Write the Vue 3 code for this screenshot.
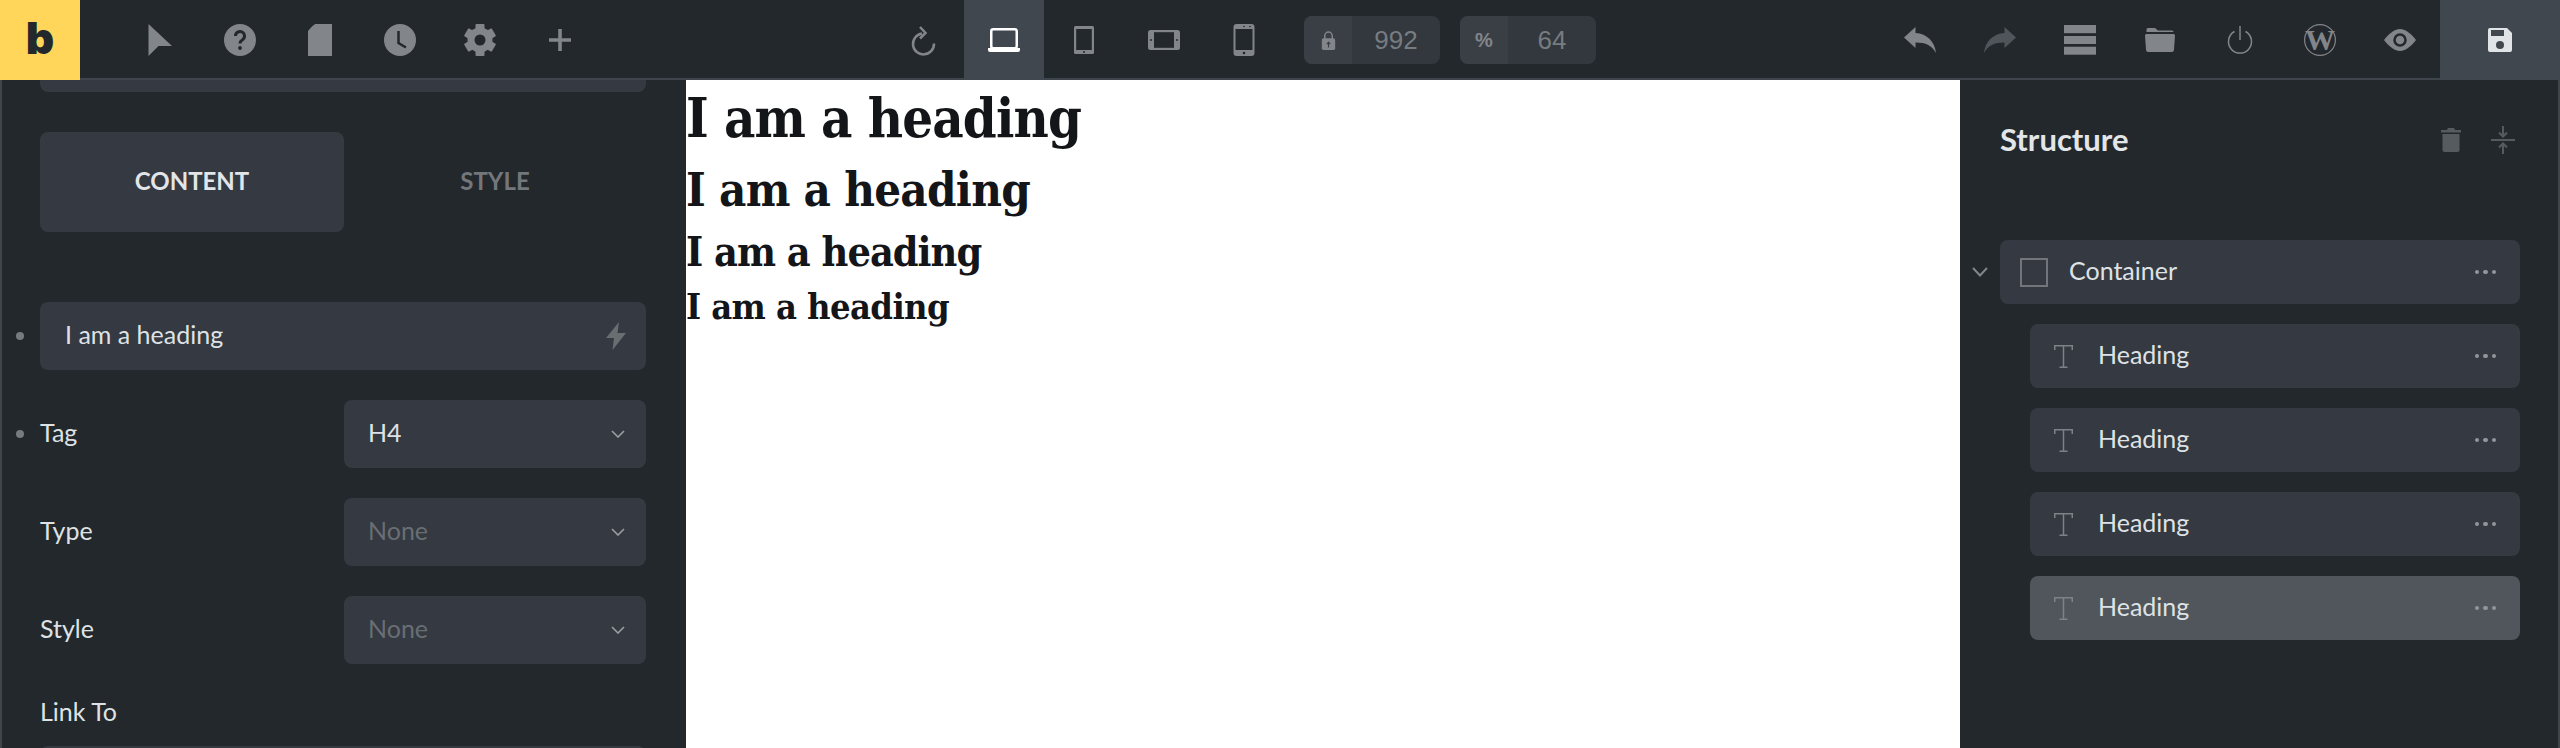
<script setup>
const selects = [
  { label: 'Tag', value: 'H4', dot: true, placeholder: false },
  { label: 'Type', value: 'None', dot: false, placeholder: true },
  { label: 'Style', value: 'None', dot: false, placeholder: true }
]
const headings = ['h1', 'h2', 'h3', 'h4']
const children = [false, false, false, true]
const teeth = [0, 60, 120, 180, 240, 300]
</script>

<template>
  <div class="app">
    <header class="topbar">
      <div class="logo">b</div>

      <div class="group first">
        <div class="cell"><svg viewBox="0 0 40 40"><path class="f" d="M8.5 4L32 26H18.5L8.5 36Z" /></svg></div>
        <div class="cell">
          <svg viewBox="0 0 40 40">
            <circle class="f" cx="20" cy="20" r="16" />
            <path class="cut" d="M15.5 16a4.5 4.5 0 1 1 7 3.7c-1.6 1-2.5 1.8-2.5 3.8" stroke-width="3" />
            <circle cx="20" cy="28" r="1.9" fill="#23282c" />
          </svg>
        </div>
        <div class="cell">
          <svg viewBox="0 0 40 40">
            <path class="f" d="M15 4H32V36H8V11Z" />
            <path class="f" d="M13.5 5L9 10H13.5Z" />
          </svg>
        </div>
        <div class="cell">
          <svg viewBox="0 0 40 40">
            <circle class="f" cx="20" cy="20" r="16" />
            <path class="cut" d="M18.5 11V23L26 27.5" stroke-width="2.5" />
          </svg>
        </div>
        <div class="cell">
          <svg viewBox="0 0 40 40">
            <circle class="f" cx="20" cy="20" r="12.5" />
            <rect v-for="t in teeth" :key="t" class="f" x="15.5" y="4" width="9" height="7" rx="1" :transform="`rotate(${t} 20 20)`" />
            <circle cx="20" cy="20" r="5.5" fill="#23282c" />
          </svg>
        </div>
        <div class="cell"><svg viewBox="0 0 40 40"><path class="s" d="M20 9V31M9 20H31" stroke-width="3.6" /></svg></div>
      </div>

      <div class="group devices">
        <div class="cell">
          <svg viewBox="0 0 40 40">
            <path class="s" d="M18 13.5A10.5 10.5 0 1 0 30 23.5" stroke-width="2.5" />
            <path class="s" d="M16 7L21.5 13L16 18.5" stroke-width="2.5" />
          </svg>
        </div>
        <div class="cell active">
          <svg viewBox="0 0 40 40">
            <rect x="7.25" y="9.25" width="25.5" height="19" rx="2" fill="none" stroke="#fff" stroke-width="2.5" />
            <path d="M4 28H36V30a2 2 0 0 1-2 2H6a2 2 0 0 1-2-2Z" fill="#fff" />
          </svg>
        </div>
        <div class="cell">
          <svg viewBox="0 0 40 40">
            <rect class="f" x="10" y="6" width="20" height="28" rx="1.5" />
            <rect x="12.2" y="9" width="15.6" height="21" fill="#23282c" />
            <circle cx="20" cy="32" r="1" fill="#23282c" />
          </svg>
        </div>
        <div class="cell">
          <svg viewBox="0 0 40 40">
            <rect class="f" x="4" y="10" width="32" height="20" rx="2.5" />
            <rect x="10" y="12.2" width="20" height="15.6" fill="#23282c" />
            <circle cx="7" cy="20" r="1" fill="#23282c" />
            <circle cx="33" cy="20" r="1" fill="#23282c" />
          </svg>
        </div>
        <div class="cell">
          <svg viewBox="0 0 40 40">
            <rect class="f" x="9.5" y="4" width="21" height="32" rx="3" />
            <rect x="11.5" y="9" width="17" height="21" fill="#23282c" />
            <circle cx="20" cy="33" r="1.3" fill="#23282c" />
            <circle cx="20" cy="6.5" r="0.8" fill="#23282c" />
            <circle cx="26" cy="6.5" r="0.8" fill="#23282c" />
          </svg>
        </div>
      </div>

      <div class="size">
        <span class="size-tag">
          <svg viewBox="0 0 20 24" class="lock">
            <path class="s" d="M5.5 12V7a4.5 4.5 0 0 1 9 0V12" stroke-width="1.8" />
            <rect class="f" x="2" y="10" width="16" height="14" rx="2" />
            <path d="M10 21V15M8 17l2-2.4L12 17" fill="none" stroke="#3a3f46" stroke-width="1.4" />
          </svg>
        </span>
        <span class="size-num">992</span>
      </div>
      <div class="size">
        <span class="size-tag pct">%</span>
        <span class="size-num">64</span>
      </div>

      <div class="group actions">
        <div class="cell">
          <svg viewBox="0 0 40 40"><path class="f" d="M4 17.5L15.5 7V13C27 13.5 35 22 36 33C32 25.5 26 22.5 15.5 22.5V28Z" /></svg>
        </div>
        <div class="cell">
          <svg viewBox="0 0 40 40"><path fill="#4f555a" d="M36 17.5L24.5 7V13C13 13.5 5 22 4 33C8 25.5 14 22.5 24.5 22.5V28Z" /></svg>
        </div>
        <div class="cell">
          <svg viewBox="0 0 40 40">
            <rect class="f" x="4" y="5" width="32" height="8.2" />
            <rect class="f" x="4" y="16" width="32" height="8" />
            <rect class="f" x="4" y="26.7" width="32" height="8" />
          </svg>
        </div>
        <div class="cell">
          <svg viewBox="0 0 40 40">
            <path class="f" d="M8 8h7l3 2.5h14a1.5 1.5 0 0 1 1.5 1.5H6.5V9.5A1.5 1.5 0 0 1 8 8Z" />
            <path class="f" d="M5 15.5A1.5 1.5 0 0 1 6.5 14h27a1.5 1.5 0 0 1 1.5 1.5L34 29.5a2.5 2.5 0 0 1-2.5 2.5h-23a2.5 2.5 0 0 1-2.5-2.5Z" />
          </svg>
        </div>
        <div class="cell">
          <svg viewBox="0 0 40 40">
            <path class="s" d="M14.5 11.5A11.5 11.5 0 1 0 25.5 11.5" stroke-width="1.5" />
            <path class="s" d="M20 6V20" stroke-width="1.5" />
          </svg>
        </div>
        <div class="cell">
          <svg viewBox="0 0 40 40">
            <circle class="s" cx="20" cy="20" r="15.4" stroke-width="1.2" />
            <text class="wp" x="20" y="30" text-anchor="middle">W</text>
          </svg>
        </div>
        <div class="cell">
          <svg viewBox="0 0 40 40">
            <path class="f" d="M4 20C10 12.5 15 9 20 9s10 3.5 16 11c-6 7.500-11 11-16 11s-10-3.500-16-11Z" />
            <circle class="f" cx="20" cy="20" r="5.500" stroke="#23282c" stroke-width="2.500" />
          </svg>
        </div>
      </div>

      <div class="save">
        <svg viewBox="0 0 40 40">
          <path fill="#e1e4e7" d="M10 8H27L32 13V30a2 2 0 0 1-2 2H10a2 2 0 0 1-2-2V10a2 2 0 0 1 2-2Z" />
          <rect x="11" y="10" width="13" height="6" fill="#40474f" />
          <circle cx="20" cy="25" r="4" fill="#40474f" />
        </svg>
      </div>
    </header>

    <div class="main">
      <aside class="panel">
        <div class="box clipped"></div>

        <div class="tabs">
          <div class="tab on">CONTENT</div>
          <div class="tab">STYLE</div>
        </div>

        <div class="row text-row">
          <i class="dot"></i>
          <div class="box input">
            <span>I am a heading</span>
            <svg class="bolt" viewBox="0 0 20 28"><path d="M13 0L0 16H8L6.500 28L20 11H11.500Z" /></svg>
          </div>
        </div>

        <div v-for="s in selects" :key="s.label" class="row">
          <i v-if="s.dot" class="dot"></i>
          <label>{{ s.label }}</label>
          <div class="box select" :class="{ placeholder: s.placeholder }">
            <span>{{ s.value }}</span>
            <svg class="chev" viewBox="0 0 14 8"><path d="M1 1L7 7L13 1" /></svg>
          </div>
        </div>

        <div class="link-label">Link To</div>
        <div class="box"></div>
      </aside>

      <section class="canvas">
        <div v-for="h in headings" :key="h" class="heading" :class="h">I am a heading</div>
      </section>

      <aside class="structure">
        <div class="st-head">
          <span class="st-title">Structure</span>
          <svg class="trash" viewBox="0 0 20 24">
            <path d="M7 0H13L14 2H20V4.500H0V2H6Z" />
            <path d="M1.500 6H18.500V22a2 2 0 0 1-2 2H3.500a2 2 0 0 1-2-2Z" />
          </svg>
          <svg class="collapse" viewBox="0 0 24 28">
            <path d="M12 0V10M8 6.500L12 10.500L16 6.500M0 14H24M12 28V18M8 21.500L12 17.500L16 21.500" />
          </svg>
        </div>

        <div class="tree">
          <div class="node-wrap">
            <svg class="tree-chev" viewBox="0 0 16 10"><path d="M1 1L8 8.500L15 1" /></svg>
            <div class="node parent">
              <i class="square"></i>
              <span>Container</span>
              <b class="more"><i></i><i></i><i></i></b>
            </div>
          </div>
          <div v-for="(sel, i) in children" :key="i" class="node child" :class="{ selected: sel }">
            <svg class="t-icon" viewBox="0 0 19 23"><path d="M.75 5V.75H18.250V5M9.500.75V22.250M5.500 22.250H13.500" /></svg>
            <span>Heading</span>
            <b class="more"><i></i><i></i><i></i></b>
          </div>
        </div>
      </aside>
    </div>
  </div>
</template>

<style scoped>
.app {
  width: 2560px;
  height: 748px;
  overflow: hidden;
  display: flex;
  flex-direction: column;
  background: #23282c;
  font-family: Lato, sans-serif;
  color: #dfe2e5;
}

.topbar {
  height: 80px;
  flex: none;
  display: flex;
  box-sizing: border-box;
  border-bottom: 2px solid #3f454c;
}
.logo {
  width: 80px;
  height: 80px;
  flex: none;
  background: #ffd65a;
  color: #23282c;
  font: 900 44px/76px Inter, sans-serif;
  text-align: center;
}
.group { display: flex; height: 80px; }
.first { margin-left: 40px; }
.devices { margin-left: 284px; }
.actions { margin-left: auto; }
.cell {
  width: 80px;
  height: 80px;
  display: flex;
  align-items: center;
  justify-content: center;
}
.cell.active { background: #40474f; }
.cell svg, .save svg { width: 40px; height: 40px; display: block; }
.f { fill: #82868b; }
.s { fill: none; stroke: #82868b; }
.cut { fill: none; stroke: #23282c; }
.wp { font: 700 30px "Liberation Serif", serif; fill: #82868b; }

.size {
  width: 136px;
  height: 48px;
  margin-top: 16px;
  margin-left: 20px;
  display: flex;
  border-radius: 8px;
  overflow: hidden;
  background: #33373e;
}
.size-tag {
  width: 48px;
  background: #3a3f46;
  display: flex;
  align-items: center;
  justify-content: center;
  color: #82868b;
}
.pct { font: 700 20px "Liberation Sans", sans-serif; }
.lock { width: 17px; height: 20px; }
.size-num {
  flex: 1;
  text-align: center;
  font: 26px/48px "Liberation Sans", sans-serif;
  color: #777c81;
}
.save {
  width: 120px;
  height: 80px;
  flex: none;
  background: #40474f;
  display: flex;
  align-items: center;
  justify-content: center;
}

.main { flex: 1; display: flex; min-height: 0; }

.panel {
  width: 686px;
  flex: none;
  box-sizing: border-box;
  padding: 0 40px 0 38px;
  border-left: 2px solid #3f454c;
  overflow: hidden;
  font-size: 25px;
}
.box {
  height: 68px;
  flex: none;
  background: #353941;
  border-radius: 8px;
}
.box span, .row label { padding-bottom: 4px; }
.clipped { margin-top: -56px; }
.tabs {
  display: grid;
  grid-template-columns: 304px 302px;
  margin-top: 40px;
  margin-bottom: 70px;
}
.tab {
  height: 100px;
  border-radius: 8px;
  line-height: 98px;
  text-align: center;
  font-size: 24px;
  font-weight: 700;
  color: #73777c;
}
.tab.on { background: #353941; color: #e3e6e9; }
.row {
  display: flex;
  align-items: center;
  margin-bottom: 30px;
}
.dot {
  width: 8px;
  height: 8px;
  flex: none;
  margin-left: -24px;
  margin-right: 16px;
  border-radius: 50%;
  background: #767b80;
}
.row label { flex: 1; }
.input {
  flex: 1;
  display: flex;
  align-items: center;
  justify-content: space-between;
  padding: 0 20px 0 25px;
}
.bolt { width: 20px; height: 28px; fill: #696e73; }
.select {
  width: 302px;
  box-sizing: border-box;
  display: flex;
  align-items: center;
  justify-content: space-between;
  padding: 0 21px 0 24px;
}
.select.placeholder span { color: #696e73; }
.chev { width: 14px; height: 8px; fill: none; stroke: #9a9ea2; stroke-width: 1.6; }
.link-label {
  height: 34px;
  line-height: 30px;
  margin-top: 32px;
  margin-bottom: 16px;
}

.canvas {
  flex: 1;
  background: #fff;
  color: #141518;
  overflow: hidden;
}
.heading {
  font-family: "DejaVu Serif", serif;
  font-stretch: condensed;
  font-weight: 700;
  white-space: nowrap;
}
.h1 { font-size: 54px; line-height: 76px; letter-spacing: -0.87px; }
.h2 { font-size: 47px; line-height: 68px; letter-spacing: -0.75px; }
.h3 { font-size: 41px; line-height: 56px; letter-spacing: -1px; }
.h4 { font-size: 36px; line-height: 52px; letter-spacing: -0.6px; }

.structure {
  width: 600px;
  flex: none;
  box-sizing: border-box;
  padding: 40px 38px 0 40px;
  border-right: 2px solid #3f454c;
  font-size: 25px;
}
.st-head {
  height: 40px;
  display: flex;
  align-items: center;
  margin-bottom: 80px;
}
.st-title { font-size: 31px; font-weight: 700; color: #e3e6e9; margin-right: auto; padding-bottom: 3px; }
.trash { width: 20px; height: 24px; fill: #565b60; margin-right: 30px; }
.collapse { width: 24px; height: 28px; fill: none; stroke: #565b60; stroke-width: 2; margin-right: 5px; }

.tree { display: flex; flex-direction: column; gap: 20px; }
.node-wrap { display: flex; align-items: center; }
.tree-chev {
  width: 16px;
  height: 10px;
  flex: none;
  margin-left: -28px;
  margin-right: 12px;
  fill: none;
  stroke: #82868b;
  stroke-width: 2;
}
.node {
  height: 64px;
  box-sizing: border-box;
  display: flex;
  align-items: center;
  background: #353941;
  border-radius: 8px;
  padding-right: 24px;
}
.node span { padding-bottom: 4px; }
.parent { flex: 1; padding-left: 20px; }
.child { margin-left: 30px; padding-left: 24px; }
.selected { background: #50565c; }
.square {
  width: 28px;
  height: 29px;
  box-sizing: border-box;
  border: 2px solid #72767b;
  margin-right: 21px;
}
.t-icon {
  width: 19px;
  height: 23px;
  margin-right: 25px;
  fill: none;
  stroke: #7e8287;
  stroke-width: 1.5;
}
.more { display: flex; gap: 4px; margin-left: auto; }
.more i { width: 4.500px; height: 4.500px; border-radius: 50%; background: #92969a; }
</style>

<style>
html, body { margin: 0; background: #23282c; }
</style>
